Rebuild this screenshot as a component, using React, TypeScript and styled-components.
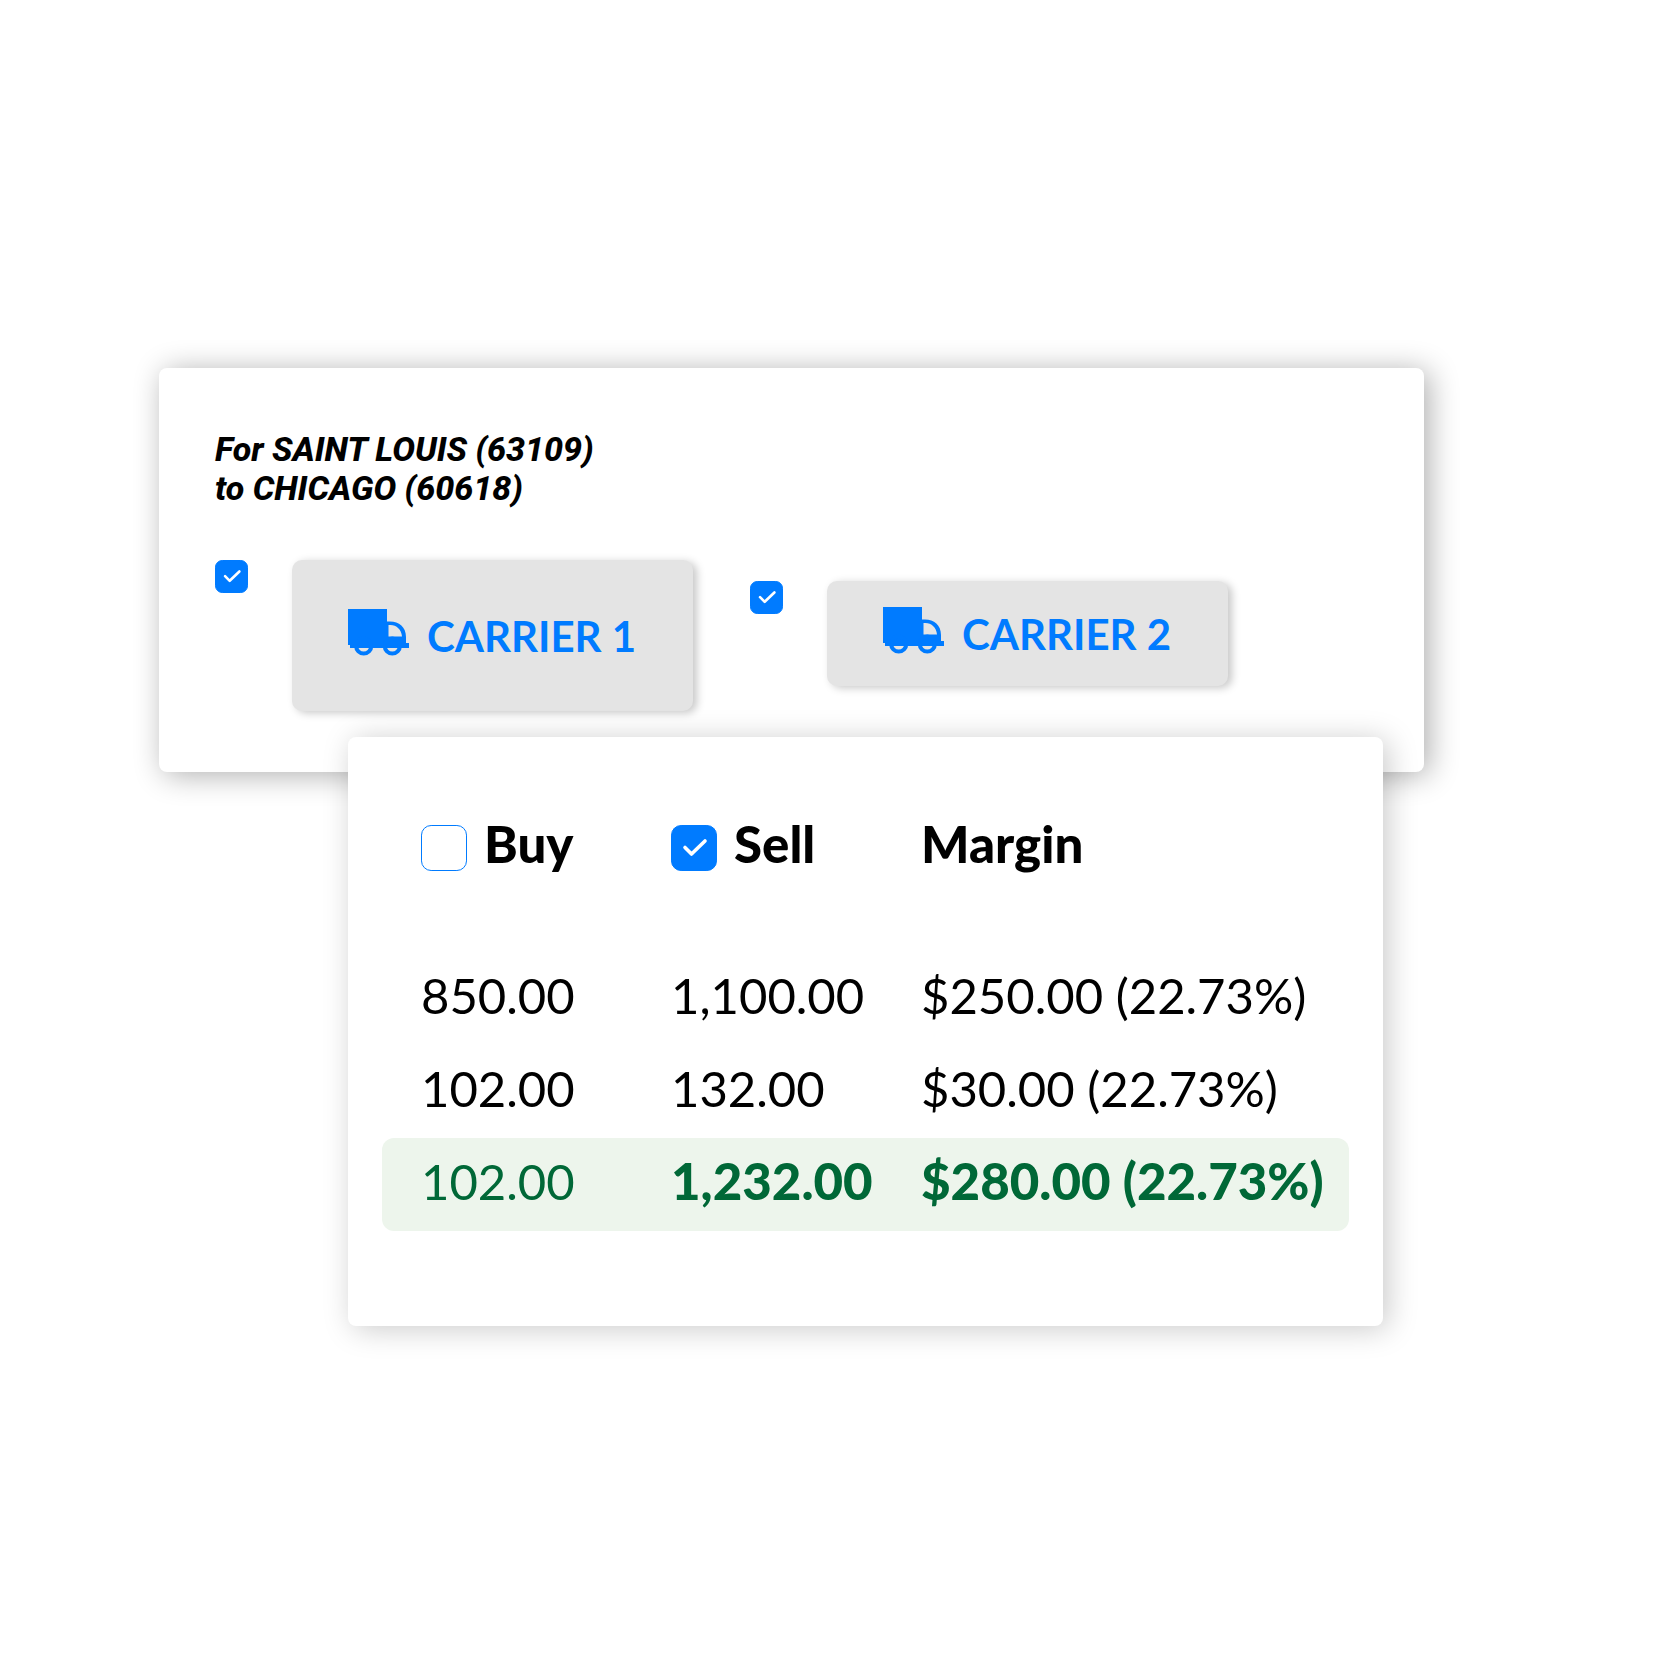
import React from "react";
import styled, { createGlobalStyle } from "styled-components";

const BLUE = "#007bff";
const GREEN = "#006837";

const GlobalStyle = createGlobalStyle`
  *, *::before, *::after { box-sizing: border-box; }
  body {
    margin: 0;
    background: #fff;
    color: #000;
    font-family: Lato, "Open Sans", sans-serif;
  }
`;

const Page = styled.main`
  padding: 368px 243px 340px 159px;
`;

const Card = styled.section`
  background: #fff;
  border-radius: 8px;
`;

const LaneCard = styled(Card)`
  padding: 62px 56px 61px;
  box-shadow: 5px 3px 30px rgba(0, 0, 0, 0.32);
`;

const RateCard = styled(Card)`
  position: relative;
  margin: -35px 41px 0 189px;
  padding: 88px 34px 95px;
  box-shadow: 5px 3px 30px rgba(0, 0, 0, 0.21);
`;

const LaneTitle = styled.h1`
  margin: 0 0 52px;
  font: italic 800 34px/39px Roboto, sans-serif;
`;

const CarrierList = styled.div`
  display: flex;
  align-items: flex-start;
  gap: 57px;
`;

const CarrierOption = styled.div<{ $lowered?: boolean }>`
  display: flex;
  align-items: flex-start;
  gap: 44px;
  margin-top: ${(p) => (p.$lowered ? 21 : 0)}px;
`;

const CarrierButton = styled.button<{ $compact?: boolean }>`
  display: flex;
  align-items: center;
  gap: 17px;
  width: 401px;
  height: ${(p) => (p.$compact ? 105 : 151)}px;
  padding: 0 56px;
  border: 0;
  border-radius: 10px;
  background: #e4e4e4;
  box-shadow: 4px 2px 8px rgba(0, 0, 0, 0.22);
  color: ${BLUE};
  font: 700 42px/50px Lato, "Open Sans", sans-serif;
  white-space: nowrap;
  cursor: pointer;
`;

const TruckSvg = styled.svg`
  flex: none;
  width: 62px;
  height: 54px;
`;

const Box = styled.span<{ $size: number }>`
  position: relative;
  flex: none;
  display: block;
  width: ${(p) => p.$size}px;
  height: ${(p) => p.$size}px;
`;

const BoxInput = styled.input`
  appearance: none;
  display: block;
  width: 100%;
  height: 100%;
  margin: 0;
  border: 1px solid ${BLUE};
  border-radius: 22%;
  background: #fff;
  cursor: pointer;

  &:checked {
    background: ${BLUE};
  }
  &:not(:checked) + svg {
    display: none;
  }
`;

const Tick = styled.svg`
  position: absolute;
  inset: 0;
  width: 100%;
  height: 100%;
  pointer-events: none;
`;

const RateTable = styled.table`
  width: 100%;
  table-layout: fixed;
  border-collapse: separate;
  border-spacing: 0;
  font-size: 49px;
  line-height: 46px;
  white-space: nowrap;
`;

const HeadCell = styled.th<{ $width?: number }>`
  width: ${(p) => (p.$width ? `${p.$width}px` : "auto")};
  height: 127px;
  padding: 0;
  text-align: left;
  vertical-align: top;
  font-size: 51px;
  font-weight: 900;

  &:first-child {
    padding-left: 39px;
  }
`;

const HeadContent = styled.div`
  display: flex;
  align-items: center;
  gap: 17px;
  height: 46px;
`;

const HeadText = styled.span`
  padding-bottom: 8px;
`;

const Cell = styled.td`
  height: 93px;
  padding: 0 0 8px;
  vertical-align: middle;

  &:first-child {
    padding-left: 39px;
  }
`;

const TotalRow = styled.tr`
  color: ${GREEN};

  ${Cell} {
    background: #edf5ec;
    font-size: 51px;
    font-weight: 900;
  }
  ${Cell}:first-child {
    border-radius: 12px 0 0 12px;
    font-size: 49px;
    font-weight: 400;
  }
  ${Cell}:last-child {
    border-radius: 0 12px 12px 0;
  }
`;

type CheckboxProps = {
  id: string;
  size: number;
  checked?: boolean;
  label?: string;
};

function Checkbox({ id, size, checked, label }: CheckboxProps) {
  return (
    <Box $size={size}>
      <BoxInput id={id} type="checkbox" defaultChecked={checked} aria-label={label} />
      <Tick viewBox="0 0 46 46" fill="none" aria-hidden="true">
        <path
          d="M14 22.5 L20.5 29 L34 16"
          stroke="#fff"
          strokeWidth="3.6"
          strokeLinecap="round"
          strokeLinejoin="round"
        />
      </Tick>
    </Box>
  );
}

function Truck() {
  return (
    <TruckSvg viewBox="0 0 62 54" aria-hidden="true">
      <g fill="currentColor">
        <path d="M0 0H39V36H0Z" />
        <path d="M2 34H61V39H2Z" />
        <path
          fillRule="evenodd"
          d="M39 12.5H42C51 12.5 58 18 58 28V36H39ZM40.5 16V27.5H54C53.5 20.5 48.5 16 42.5 16Z"
        />
      </g>
      <g fill="none" stroke="currentColor" strokeWidth="4">
        <circle cx="15.7" cy="37" r="7.6" />
        <circle cx="44.3" cy="37" r="7.6" />
      </g>
    </TruckSvg>
  );
}

const rates = [
  { buy: "850.00", sell: "1,100.00", margin: "$250.00 (22.73%)" },
  { buy: "102.00", sell: "132.00", margin: "$30.00 (22.73%)" },
];

export default function App() {
  return (
    <>
      <GlobalStyle />
      <Page>
        <LaneCard>
          <LaneTitle>
            For SAINT LOUIS (63109)
            <br />
            to CHICAGO (60618)
          </LaneTitle>
          <CarrierList>
            <CarrierOption>
              <Checkbox id="carrier-1" size={33} checked label="Select carrier 1" />
              <CarrierButton type="button">
                <Truck />
                CARRIER 1
              </CarrierButton>
            </CarrierOption>
            <CarrierOption $lowered>
              <Checkbox id="carrier-2" size={33} checked label="Select carrier 2" />
              <CarrierButton type="button" $compact>
                <Truck />
                CARRIER 2
              </CarrierButton>
            </CarrierOption>
          </CarrierList>
        </LaneCard>

        <RateCard>
          <RateTable>
            <thead>
              <tr>
                <HeadCell scope="col" $width={289}>
                  <HeadContent>
                    <Checkbox id="buy" size={46} />
                    <HeadText as="label" htmlFor="buy">Buy</HeadText>
                  </HeadContent>
                </HeadCell>
                <HeadCell scope="col" $width={250}>
                  <HeadContent>
                    <Checkbox id="sell" size={46} checked />
                    <HeadText as="label" htmlFor="sell">Sell</HeadText>
                  </HeadContent>
                </HeadCell>
                <HeadCell scope="col">
                  <HeadContent>
                    <HeadText>Margin</HeadText>
                  </HeadContent>
                </HeadCell>
              </tr>
            </thead>
            <tbody>
              {rates.map((r) => (
                <tr key={r.buy}>
                  <Cell>{r.buy}</Cell>
                  <Cell>{r.sell}</Cell>
                  <Cell>{r.margin}</Cell>
                </tr>
              ))}
              <TotalRow>
                <Cell>102.00</Cell>
                <Cell>1,232.00</Cell>
                <Cell>$280.00 (22.73%)</Cell>
              </TotalRow>
            </tbody>
          </RateTable>
        </RateCard>
      </Page>
    </>
  );
}
